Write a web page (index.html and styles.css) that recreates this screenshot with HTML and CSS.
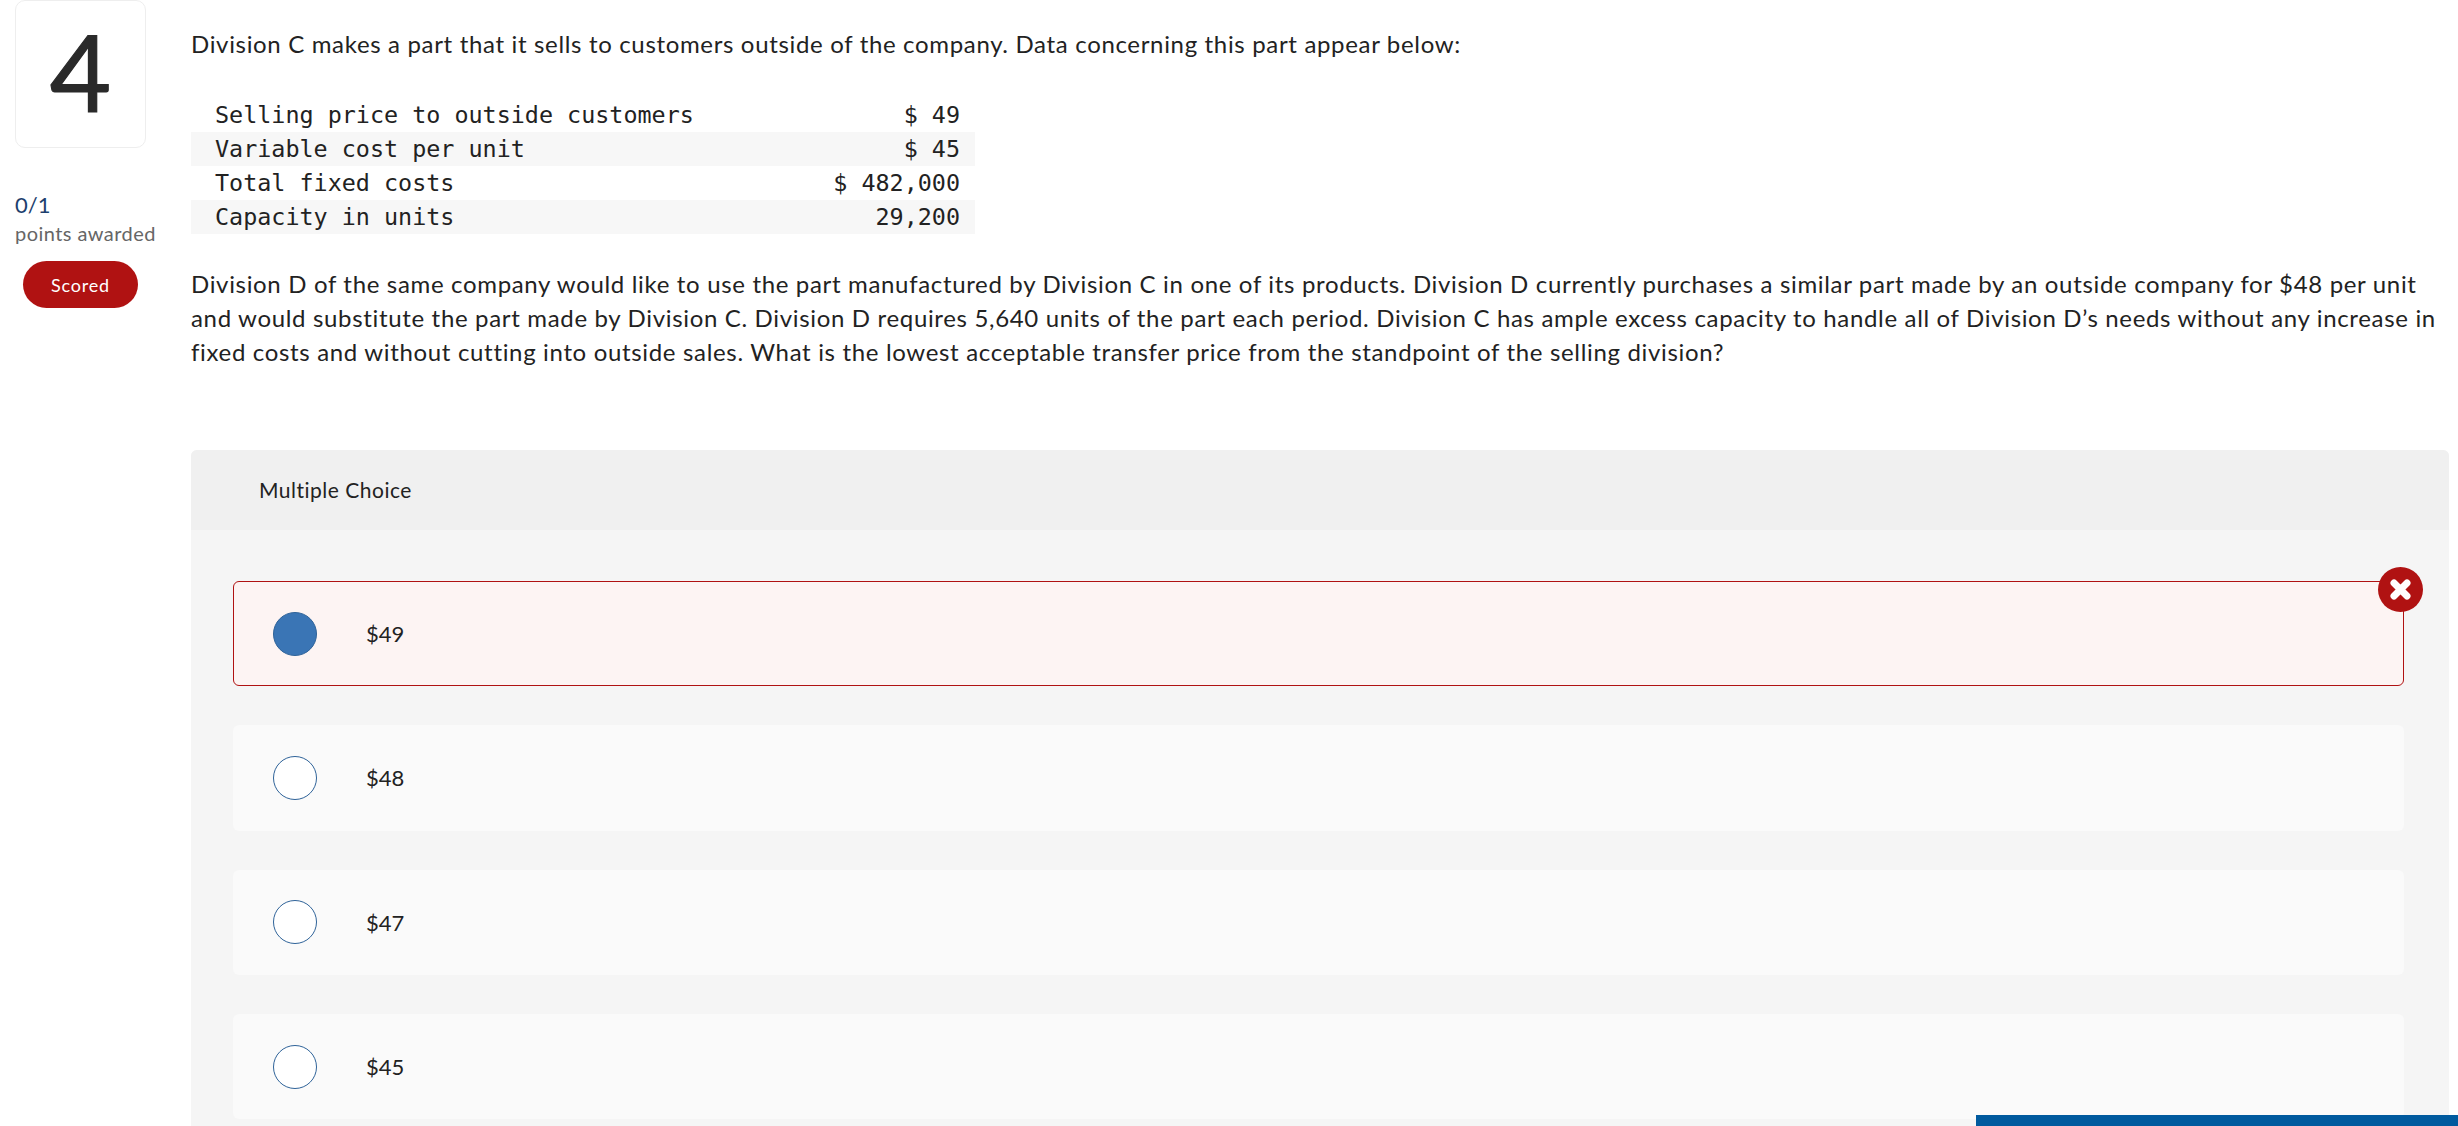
FILE: index.html
```html
<!DOCTYPE html>
<html lang="en">
<head>
<meta charset="utf-8">
<title>Question 4</title>
<link rel="stylesheet" href="styles.css">
</head>
<body>
<div class="page">
  <aside class="side">
    <div class="qnum">4</div>
    <div class="score">0/1</div>
    <div class="awarded">points awarded</div>
    <div class="pill">Scored</div>
  </aside>
  <main class="main">
    <p class="para first">Division C makes a part that it sells to customers outside of the company. Data concerning this part appear below:</p>
    <table class="data">
      <tr><td>Selling price to outside customers</td><td class="num">$ 49</td></tr>
      <tr class="alt"><td>Variable cost per unit</td><td class="num">$ 45</td></tr>
      <tr><td>Total fixed costs</td><td class="num">$ 482,000</td></tr>
      <tr class="alt"><td>Capacity in units</td><td class="num">29,200</td></tr>
    </table>
    <p class="para second">Division D of the same company would like to use the part manufactured by Division C in one of its products. Division D currently purchases a similar part made by an outside company for $48 per unit and would substitute the part made by Division C. Division D requires 5,640 units of the part each period. Division C has ample excess capacity to handle all of Division D’s needs without any increase in fixed costs and without cutting into outside sales. What is the lowest acceptable transfer price from the standpoint of the selling division?</p>
    <section class="panel">
      <header class="panel-head">Multiple Choice</header>
      <div class="options">
        <div class="option wrong">
          <span class="radio checked"></span><span class="label">$49</span>
          <svg class="badge" viewBox="0 0 45 45" aria-hidden="true"><circle cx="22.5" cy="22.5" r="22.5" fill="#b01212"/><path d="M16 16L29 29M29 16L16 29" stroke="#fff" stroke-width="7" stroke-linecap="round"/></svg>
        </div>
        <div class="option"><span class="radio"></span><span class="label">$48</span></div>
        <div class="option"><span class="radio"></span><span class="label">$47</span></div>
        <div class="option"><span class="radio"></span><span class="label">$45</span></div>
      </div>
    </section>
  </main>
</div>
<div class="bottom-bar"></div>
</body>
</html>
```
FILE: styles.css
```css
* { box-sizing: border-box; }
html, body { margin: 0; height: 100%; overflow: hidden; background: #fff; }
body { font-family: Lato, "Open Sans", sans-serif; color: #222; }
.page { display: flex; height: 1126px; overflow: hidden; }
.side { width: 191px; flex: none; padding-left: 15px; }
.qnum {
  width: 131px; height: 148px; padding-bottom: 7px;
  border: 1px solid #eee; border-radius: 10px;
  display: flex; align-items: center; justify-content: center;
  font-size: 106px; font-weight: 400; line-height: 1; color: #2a2a2a;
  -webkit-text-stroke: 1.2px #2a2a2a;
}
.score { margin-top: 44px; font-size: 22px; line-height: 26px; color: #1d3f6e; }
.awarded { margin-top: 3px; font-size: 20px; line-height: 24px; letter-spacing: 0.45px; color: #666; white-space: nowrap; }
.pill {
  margin: 16px 0 0 8px; width: 115px; height: 47px; border-radius: 24px;
  background: #b01212; color: #fff; font-size: 18px; letter-spacing: 0.8px;
  display: flex; align-items: center; justify-content: center;
}
.main { width: 2258px; flex: none; display: flex; flex-direction: column; }
.para { margin: 0; font-size: 24px; line-height: 34px; letter-spacing: 0.665px; color: #222; }
.first { margin-top: 27px; }
.second { margin-top: 33px; }
.data {
  margin-top: 37px; width: 784px; border-collapse: collapse;
  font-family: "DejaVu Sans Mono", monospace; font-size: 23.4px; color: #222;
}
.data td { height: 34px; padding: 0 15px 0 24px; white-space: nowrap; }
.data .num { text-align: right; }
.alt { background: #f7f7f7; }
.panel { margin-top: 81px; flex: 1; background: #f5f5f5; border-radius: 6px 6px 0 0; }
.panel-head {
  height: 80px; padding: 0 0 2px 68px; background: #f0f0f0; border-radius: 6px 6px 0 0;
  display: flex; align-items: center; font-size: 21px; letter-spacing: 0.5px; color: #222;
}
.options { padding: 51px 45px 0 42px; display: flex; flex-direction: column; gap: 39px; }
.option {
  position: relative; height: 105.33px; flex: none; padding-left: 40px;
  background: #fafafa; border-radius: 6px;
  display: flex; align-items: center;
}
.wrong { background: #fdf4f3; border: 1px solid #b01212; padding-left: 39px; }
.radio { width: 44px; height: 44px; border-radius: 50%; background: #fff; border: 1px solid #2f6399; flex: none; }
.radio.checked { background: #3a75b5; }
.label { margin-left: 49px; font-size: 22px; color: #222; }
.badge { position: absolute; top: -15px; right: -20px; width: 45px; height: 45px; }
.bottom-bar { position: fixed; left: 1976px; right: 0; bottom: 0; height: 11px; background: #005a9e; }
```
